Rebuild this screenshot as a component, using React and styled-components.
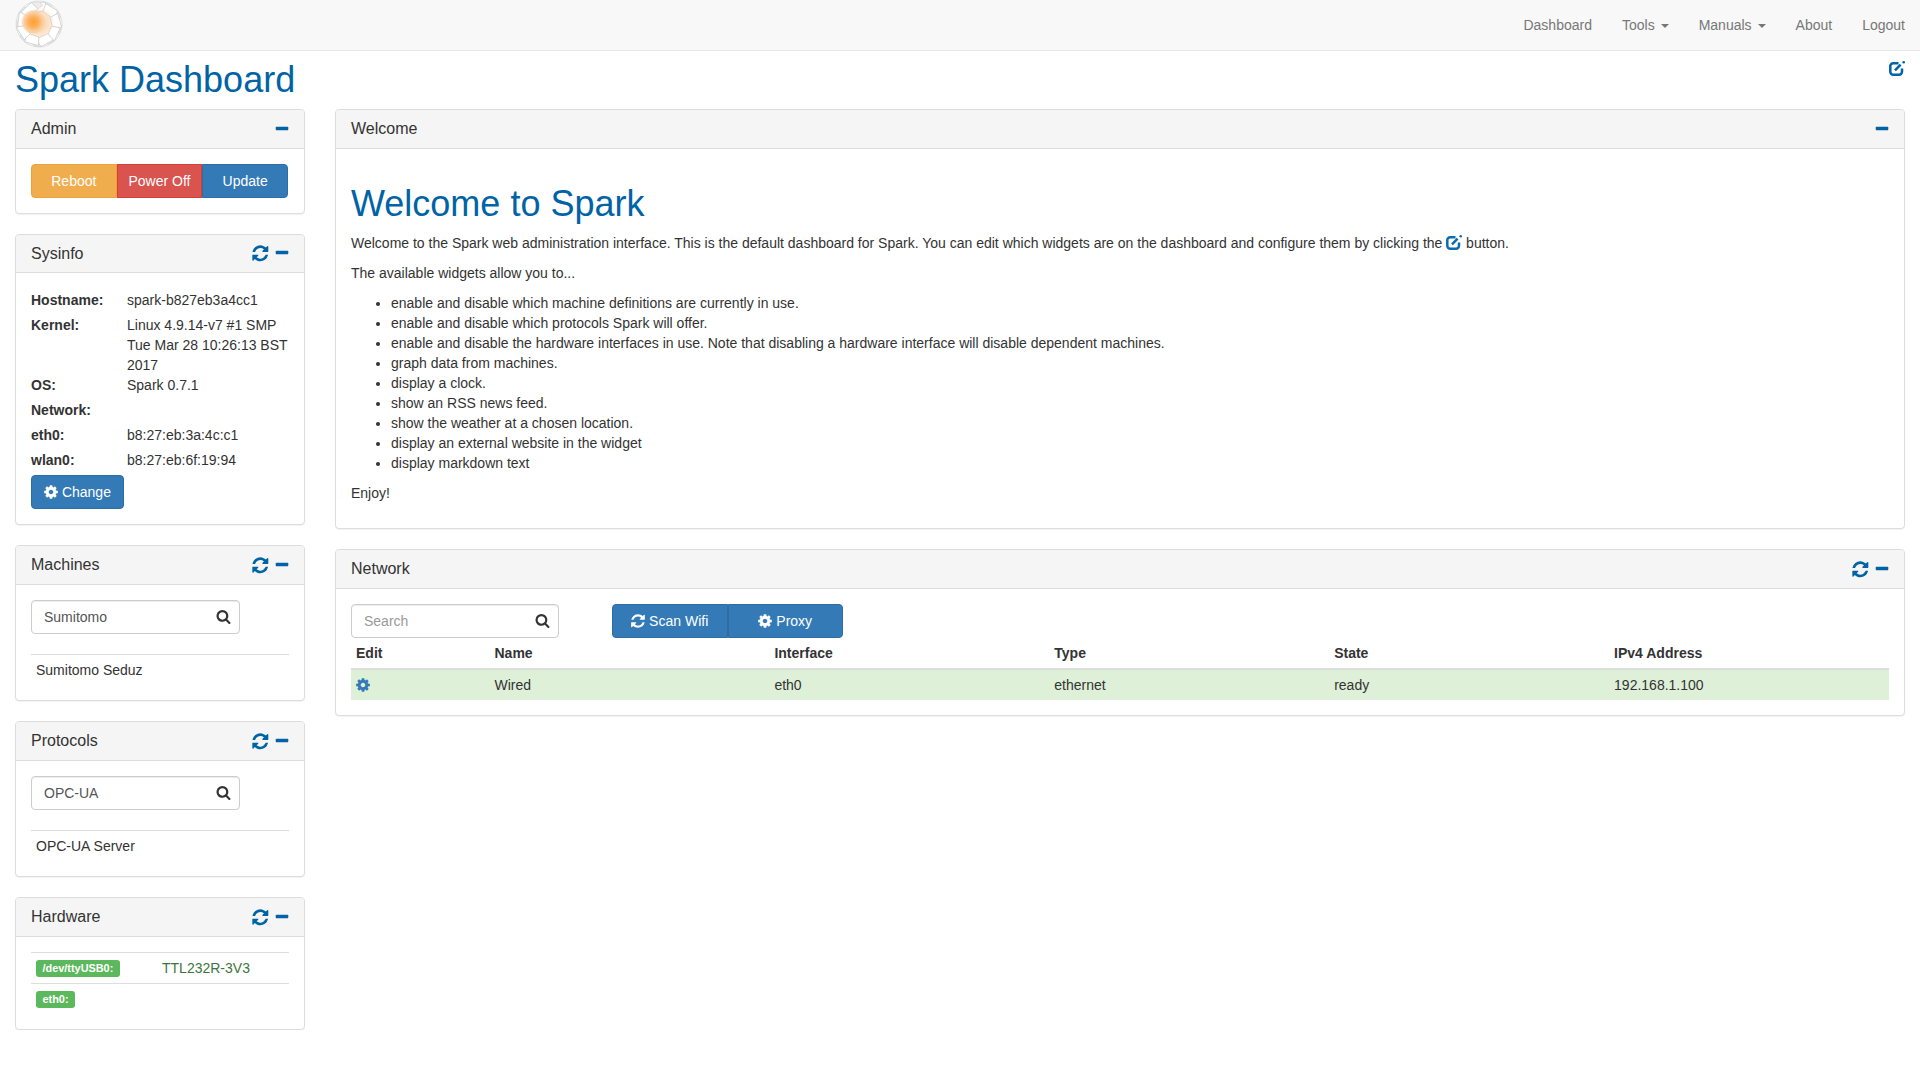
import React from "react";
import styled, { createGlobalStyle } from "styled-components";

const GlobalStyle = createGlobalStyle`
  html, body {
    margin: 0;
    background: #fff;
  }
  body {
    font-family: "Liberation Sans", Arial, sans-serif;
    font-size: 14px;
    line-height: 20px;
    color: #333;
  }
  * {
    box-sizing: border-box;
  }
`;

// font-awesome 4 glyphs, all on a 1792 grid
const iconPaths = {
  refresh:
    "M1639 1056q0 5-1 7-64 268-268 434.5t-478 166.5q-146 0-282.5-55t-243.5-157l-129 129q-19 19-45 19t-45-19-19-45v-448q0-26 19-45t45-19h448q26 0 45 19t19 45-19 45l-137 137q71 66 161 102t187 36q134 0 250-65t186-179q11-17 53-117 8-23 30-23h192q13 0 22.5 9.5t9.5 22.5zm25-800v448q0 26-19 45t-45 19h-448q-26 0-45-19t-19-45 19-45l138-138q-148-137-349-137-134 0-250 65t-186 179q-11 17-53 117-8 23-30 23h-199q-13 0-22.5-9.5t-9.5-22.5v-7q65-268 270-434.5t480-166.5q146 0 284 55.5t245 156.5l130-129q19-19 45-19t45 19 19 45z",
  cog: "M1152 896q0-106-75-181t-181-75-181 75-75 181 75 181 181 75 181-75 75-181zm512-109v222q0 12-8 23t-20 13l-185 28q-19 54-39 91 35 50 107 138 10 12 10 25t-9 23q-27 37-99 108t-94 71q-12 0-26-9l-138-108q-44 23-91 38-16 136-29 186-7 28-36 28h-222q-14 0-24.5-8.5t-11.5-21.5l-28-184q-49-16-90-37l-141 107q-10 9-25 9-14 0-25-11-126-114-165-168-7-10-7-23 0-12 8-23 15-21 51-66.5t54-70.5q-27-50-41-99l-183-27q-13-2-21-12.5t-8-23.5v-222q0-12 8-23t19-13l186-28q14-46 39-92-40-57-107-138-10-12-10-24 0-10 9-23 26-36 98.5-107.5t94.5-71.5q13 0 26 10l138 107q44-23 91-38 16-136 29-186 7-28 36-28h222q14 0 24.5 8.5t11.5 21.5l28 184q49 16 90 37l142-107q9-9 24-9 13 0 25 10 129 119 165 170 7 8 7 22 0 12-8 23-15 21-51 66.5t-54 70.5q26 50 41 98l183 28q13 2 21 12.5t8 23.5z",
  search:
    "M1216 832q0-185-131.5-316.5t-316.5-131.5-316.5 131.5-131.5 316.5 131.5 316.5 316.5 131.5 316.5-131.5 131.5-316.5zm512 832q0 52-38 90t-90 38q-54 0-90-38l-343-342q-179 124-399 124-143 0-273.5-55.5t-225-150-150-225-55.5-273.5 55.5-273.5 150-225 225-150 273.5-55.5 273.5 55.5 225 150 150 225 55.5 273.5q0 220-124 399l343 343q37 37 37 90z",
  minus:
    "M1600 736v192q0 40-28 68t-68 28h-1216q-40 0-68-28t-28-68v-192q0-40 28-68t68-28h1216q40 0 68 28t28 68z",
};

const IconSvg = styled.svg`
  display: inline-block;
  flex: none;
  width: ${(p) => p.$size}px;
  height: ${(p) => p.$size}px;
  margin: 0 ${(p) => p.$trim}px;
  fill: ${(p) => p.$color};
  vertical-align: ${(p) => p.$align};
`;

function Icon({ name, size = 14, color = "currentColor", align = "-2px", trim = 0 }) {
  return (
    <IconSvg viewBox="0 0 1792 1792" $size={size} $color={color} $align={align} $trim={trim}>
      <path d={iconPaths[name]} />
    </IconSvg>
  );
}

const EditSvg = styled.svg`
  display: inline-block;
  width: 16px;
  height: 15px;
  vertical-align: ${(p) => p.$align};
`;

// the hinted edit glyph: open rounded square, short slash and a dot
function EditIcon({ color = "#0063a5", align = "top" }) {
  return (
    <EditSvg viewBox="0 0 16 15" $align={align}>
      <path
        d="M9.5 2.2H4.2a2.9 2.9 0 0 0-2.9 2.9v5.7a2.9 2.9 0 0 0 2.9 2.9h5.9a2.9 2.9 0 0 0 2.9-2.9V7.5"
        fill="none"
        stroke={color}
        strokeWidth="2.5"
      />
      <path d="M6 9.3 L11.6 3.7" fill="none" stroke={color} strokeWidth="2.6" />
      <circle cx="14.7" cy="1.3" r="1.3" fill={color} />
    </EditSvg>
  );
}

const LogoSvg = styled.svg`
  display: block;
  width: 50px;
  height: 50px;
  margin-left: 14px;
`;

const logoBlocks = [0, 40, 82, 122, 160, 203, 245, 285, 325];

function Logo() {
  return (
    <LogoSvg viewBox="0 0 50 50">
      <defs>
        <radialGradient id="sparkGlow" cx="0.5" cy="0.5" r="0.5">
          <stop offset="0" stopColor="#fca02a" />
          <stop offset="0.4" stopColor="#fbb160" />
          <stop offset="0.72" stopColor="#fbcd9c" />
          <stop offset="1" stopColor="#fbe3c8" stopOpacity="0" />
        </radialGradient>
      </defs>
      <circle cx="25" cy="24" r="23" fill="#fafafa" stroke="#d6d6d6" strokeWidth="0.7" />
      {logoBlocks.map((angle) => (
        <g key={angle} transform={`rotate(${angle} 25 24)`}>
          <path d="M17 4 L31 2 L33 11 L20 12 Z" fill="#fff" stroke="#c9c9c9" strokeWidth="0.7" />
          <path d="M31 2 L37 5 L39 11 L33 11 Z" fill="#ececec" stroke="#cfcfcf" strokeWidth="0.5" />
        </g>
      ))}
      <circle cx="25" cy="23" r="16" fill="url(#sparkGlow)" opacity="0.45" />
      <circle cx="19.5" cy="22" r="13" fill="url(#sparkGlow)" />
      <circle cx="19.5" cy="22" r="10.8" fill="none" stroke="#e8c9a2" strokeWidth="0.5" />
    </LogoSvg>
  );
}

const Navbar = styled.nav`
  display: flex;
  justify-content: space-between;
  height: 51px;
  background: #f8f8f8;
  border-bottom: 1px solid #e7e7e7;
`;

const NavLinks = styled.div`
  display: flex;
`;

const NavLink = styled.a`
  padding: 15px;
  color: #777;
  line-height: 20px;
`;

const Caret = styled.span`
  display: inline-block;
  width: 0;
  height: 0;
  margin-left: 6px;
  vertical-align: middle;
  border-top: 4px solid #777;
  border-left: 4px solid transparent;
  border-right: 4px solid transparent;
`;

const Content = styled.main`
  padding: 0 15px;
`;

const TitleRow = styled.header`
  display: flex;
  justify-content: space-between;
  align-items: flex-start;
  margin-bottom: 9px;
`;

const PageTitle = styled.h1`
  margin: 9.4px 0 0;
  font-size: 36px;
  font-weight: 400;
  line-height: 1.1;
  color: #0063a5;
`;

const EditLink = styled.a`
  display: block;
  margin-top: 10px;
  height: 15px;
  line-height: 15px;
`;

const Columns = styled.div`
  display: grid;
  grid-template-columns: 290px 1fr;
  column-gap: 30px;
  align-items: start;
`;

const Column = styled.div`
  display: flex;
  flex-direction: column;
  gap: 20px;
`;

const PanelBox = styled.section`
  background: #fff;
  border: 1px solid #ddd;
  border-radius: 4px;
  box-shadow: 0 1px 1px rgba(0, 0, 0, 0.05);
`;

const PanelHeading = styled.div`
  display: flex;
  justify-content: space-between;
  align-items: center;
  padding: 10px 15px;
  background: #f5f5f5;
  border-bottom: 1px solid #ddd;
  border-radius: 3px 3px 0 0;
`;

const PanelTitle = styled.h3`
  margin: 0;
  font-size: 16px;
  font-weight: 400;
  line-height: 1.1;
  color: #333;
`;

const PanelTools = styled.div`
  display: flex;
  align-items: center;
  gap: 4px;
  height: 17.6px;
  margin-right: -1px;
`;

const PanelBody = styled.div`
  padding: 15px;
`;

function Panel({ title, refresh = true, children }) {
  return (
    <PanelBox>
      <PanelHeading>
        <PanelTitle>{title}</PanelTitle>
        <PanelTools>
          {refresh && <Icon name="refresh" size={18.67} color="#0063a5" />}
          <Icon name="minus" size={16} color="#0063a5" />
        </PanelTools>
      </PanelHeading>
      <PanelBody>{children}</PanelBody>
    </PanelBox>
  );
}

const buttonColors = {
  warning: { bg: "#f0ad4e", border: "#eea236" },
  danger: { bg: "#d9534f", border: "#d43f3a" },
  primary: { bg: "#337ab7", border: "#2e6da4" },
};

const Button = styled.button`
  display: inline-block;
  height: 34px;
  padding: 6px 12px;
  font-family: inherit;
  font-size: 14px;
  line-height: 20px;
  color: #fff;
  text-align: center;
  background: ${(p) => buttonColors[p.$kind].bg};
  border: 1px solid ${(p) => buttonColors[p.$kind].border};
  border-radius: 4px;
`;

const ButtonGroup = styled.div`
  display: flex;
  width: ${(p) => p.$width}px;

  ${Button} {
    flex: 1 1 0;
    padding: 6px 0;
    border-radius: 0;
  }
  ${Button}:first-child {
    border-radius: 4px 0 0 4px;
  }
  ${Button}:last-child {
    border-radius: 0 4px 4px 0;
  }
`;

const InfoList = styled.dl`
  display: grid;
  grid-template-columns: 96px 1fr;
  margin: 2px 0 0;
`;

const InfoLabel = styled.dt`
  margin-bottom: 5px;
  font-weight: 700;
`;

const InfoValue = styled.dd`
  margin: 0;
`;

const SearchBox = styled.div`
  position: relative;
  width: ${(p) => p.$width}px;
`;

const SearchInput = styled.input`
  display: block;
  width: 100%;
  height: 34px;
  padding: 6px 12px;
  font-family: inherit;
  font-size: 14px;
  color: #555;
  background: #fff;
  border: 1px solid #ccc;
  border-radius: 4px;
  box-shadow: inset 0 1px 1px rgba(0, 0, 0, 0.075);
  outline: none;

  &::placeholder {
    color: #999;
    opacity: 1;
  }
`;

const SearchIcon = styled.span`
  position: absolute;
  top: 9.5px;
  right: 9px;
  display: flex;
  color: #333;
`;

function Search({ width = 209, value, placeholder }) {
  return (
    <SearchBox $width={width}>
      <SearchInput readOnly value={value} placeholder={placeholder} />
      <SearchIcon>
        <Icon name="search" size={15} />
      </SearchIcon>
    </SearchBox>
  );
}

const FilterList = styled.div`
  margin-top: 20px;
`;

const FilterRow = styled.div`
  display: ${(p) => (p.$split ? "grid" : "block")};
  grid-template-columns: 126px 1fr;
  padding: 5px;
  padding-bottom: 5.4px;
  border-top: 1px solid #ddd;
`;

const Badge = styled.span`
  display: inline-block;
  padding: 0 6.5px;
  margin-top: 2px;
  font-size: 10.9px;
  font-weight: 700;
  line-height: 17px;
  color: #fff;
  vertical-align: top;
  background: #5cb85c;
  border-radius: 3px;
`;

const HardwareName = styled.span`
  color: #3c763d;
`;

const HardwareRows = styled.div`
  margin-bottom: -0.6px;
`;

const WelcomeHeading = styled.h1`
  margin: 20px 0 10px;
  font-size: 36px;
  font-weight: 400;
  line-height: 1.1;
  color: #0063a5;
`;

const Text = styled.p`
  margin: 0 0 10px;
`;

const FeatureList = styled.ul`
  margin: 0 0 10px;
  padding-left: 40px;
`;

const NetworkBar = styled.div`
  display: flex;
  gap: 53px;
`;

const DataTable = styled.table`
  width: 100%;
  border-collapse: collapse;
  table-layout: fixed;
`;

const HeadCell = styled.th`
  width: ${(p) => (p.$narrow ? "138.5px" : "auto")};
  padding: 5px;
  text-align: left;
  font-weight: 700;
  line-height: 20px;
  border-bottom: 2px solid #ddd;
`;

const Cell = styled.td`
  padding: 5px;
  line-height: 20px;
  background: #dff0d8;
`;

const welcomeItems = [
  "enable and disable which machine definitions are currently in use.",
  "enable and disable which protocols Spark will offer.",
  "enable and disable the hardware interfaces in use. Note that disabling a hardware interface will disable dependent machines.",
  "graph data from machines.",
  "display a clock.",
  "show an RSS news feed.",
  "show the weather at a chosen location.",
  "display an external website in the widget",
  "display markdown text",
];

const sysinfo = [
  ["Hostname:", "spark-b827eb3a4cc1"],
  ["Kernel:", "Linux 4.9.14-v7 #1 SMP Tue Mar 28 10:26:13 BST 2017"],
  ["OS:", "Spark 0.7.1"],
  ["Network:", ""],
  ["eth0:", "b8:27:eb:3a:4c:c1"],
  ["wlan0:", "b8:27:eb:6f:19:94"],
];

const networkColumns = ["Edit", "Name", "Interface", "Type", "State", "IPv4 Address"];

export default function App() {
  return (
    <>
      <GlobalStyle />
      <Navbar>
        <Logo />
        <NavLinks>
          <NavLink>Dashboard</NavLink>
          <NavLink>
            Tools
            <Caret />
          </NavLink>
          <NavLink>
            Manuals
            <Caret />
          </NavLink>
          <NavLink>About</NavLink>
          <NavLink>Logout</NavLink>
        </NavLinks>
      </Navbar>
      <Content>
        <TitleRow>
          <PageTitle>Spark Dashboard</PageTitle>
          <EditLink>
            <EditIcon />
          </EditLink>
        </TitleRow>
        <Columns>
          <Column>
            <Panel title="Admin" refresh={false}>
              <ButtonGroup $width={257}>
                <Button $kind="warning">Reboot</Button>
                <Button $kind="danger">Power Off</Button>
                <Button $kind="primary">Update</Button>
              </ButtonGroup>
            </Panel>
            <Panel title="Sysinfo">
              <InfoList>
                {sysinfo.map(([label, value]) => (
                  <React.Fragment key={label}>
                    <InfoLabel>{label}</InfoLabel>
                    <InfoValue>{value}</InfoValue>
                  </React.Fragment>
                ))}
              </InfoList>
              <Button $kind="primary">
                <Icon name="cog" size={16} trim={-1} align="-3px" /> Change
              </Button>
            </Panel>
            <Panel title="Machines">
              <Search value="Sumitomo" />
              <FilterList>
                <FilterRow>Sumitomo Seduz</FilterRow>
              </FilterList>
            </Panel>
            <Panel title="Protocols">
              <Search value="OPC-UA" />
              <FilterList>
                <FilterRow>OPC-UA Server</FilterRow>
              </FilterList>
            </Panel>
            <Panel title="Hardware">
              <HardwareRows>
                <FilterRow $split>
                  <span>
                    <Badge>/dev/ttyUSB0:</Badge>
                  </span>
                  <HardwareName>TTL232R-3V3</HardwareName>
                </FilterRow>
                <FilterRow $split>
                  <span>
                    <Badge>eth0:</Badge>
                  </span>
                </FilterRow>
              </HardwareRows>
            </Panel>
          </Column>
          <Column>
            <Panel title="Welcome" refresh={false}>
              <WelcomeHeading>Welcome to Spark</WelcomeHeading>
              <Text>
                Welcome to the Spark web administration interface. This is the default dashboard for
                Spark. You can edit which widgets are on the dashboard and configure them by clicking
                the <EditIcon color="#0b6cb0" align="-2px" /> button.
              </Text>
              <Text>The available widgets allow you to...</Text>
              <FeatureList>
                {welcomeItems.map((item) => (
                  <li key={item}>{item}</li>
                ))}
              </FeatureList>
              <Text>Enjoy!</Text>
            </Panel>
            <Panel title="Network">
              <NetworkBar>
                <Search width={208} placeholder="Search" />
                <ButtonGroup $width={231}>
                  <Button $kind="primary">
                    <Icon name="refresh" size={16} trim={-1} align="-3px" /> Scan Wifi
                  </Button>
                  <Button $kind="primary">
                    <Icon name="cog" size={16} trim={-1} align="-3px" /> Proxy
                  </Button>
                </ButtonGroup>
              </NetworkBar>
              <DataTable>
                <thead>
                  <tr>
                    {networkColumns.map((column, i) => (
                      <HeadCell key={column} $narrow={i === 0}>
                        {column}
                      </HeadCell>
                    ))}
                  </tr>
                </thead>
                <tbody>
                  <tr>
                    <Cell>
                      <Icon name="cog" size={16} color="#337ab7" trim={-1} align="-3px" />
                    </Cell>
                    <Cell>Wired</Cell>
                    <Cell>eth0</Cell>
                    <Cell>ethernet</Cell>
                    <Cell>ready</Cell>
                    <Cell>192.168.1.100</Cell>
                  </tr>
                </tbody>
              </DataTable>
            </Panel>
          </Column>
        </Columns>
      </Content>
    </>
  );
}
